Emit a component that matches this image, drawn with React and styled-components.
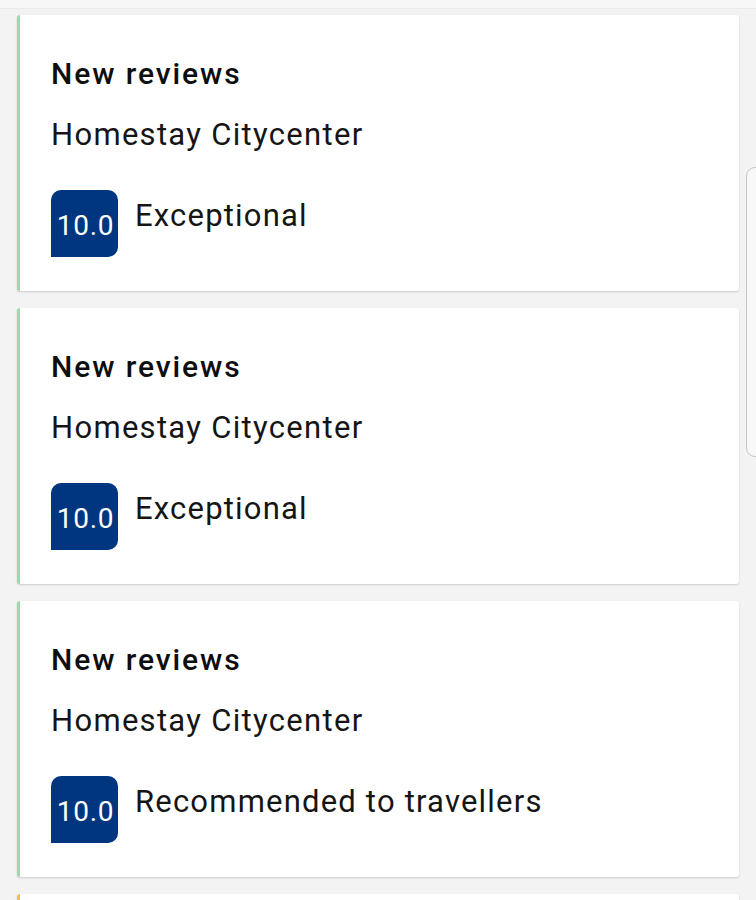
import React from "react";
import styled, { createGlobalStyle } from "styled-components";

const Global = createGlobalStyle`
  html, body {
    margin: 0;
    padding: 0;
    background: #f3f3f3;
    font-family: Roboto, "Noto Sans", "Liberation Sans", sans-serif;
    overflow: hidden;
  }
  #root { height: 900px; position: relative; overflow: hidden; }
`;

const TopStrip = styled.div`
  height: 8px;
  background: #f7f7f7;
  border-bottom: 1px solid #ebebeb;
`;

const List = styled.div`
  display: flex;
  flex-direction: column;
  gap: 17px;
  padding: 6px 17px 0 17px;
`;

const Card = styled.div`
  background: #ffffff;
  border-left: 3px solid ${(p) => p.$accent};
  border-radius: 3px;
  box-shadow: 0 1px 2px rgba(0, 0, 0, 0.16);
  padding: 41px 24px 34px 31px;
  display: flex;
  flex-direction: column;
  min-height: ${(p) => (p.$stub ? "60px" : "auto")};
`;

const Title = styled.div`
  font-size: 30px;
  font-weight: 500;
  line-height: 36px;
  letter-spacing: 1.9px;
  color: #0e0e0e;
`;

const Property = styled.div`
  font-size: 31px;
  line-height: 40px;
  letter-spacing: 1.3px;
  color: #151515;
  margin-top: 23px;
`;

const ScoreRow = styled.div`
  display: flex;
  align-items: flex-start;
  gap: 17px;
  margin-top: 35px;
`;

const Badge = styled.div`
  width: 67px;
  height: 67px;
  flex: none;
  background: #003580;
  border-radius: 10px 10px 10px 0;
  color: #ffffff;
  font-size: 28px;
  letter-spacing: 0.7px;
  display: flex;
  align-items: center;
  justify-content: center;
  padding: 4px 0 0 2px;
  box-sizing: border-box;
`;

const Label = styled.div`
  font-size: 31px;
  line-height: 40px;
  letter-spacing: 1.2px;
  color: #151515;
  margin-top: 6px;
`;

const Handle = styled.div`
  position: absolute;
  left: 746px;
  top: 167px;
  width: 30px;
  height: 288px;
  border: 1px solid #c4c4c4;
  border-radius: 9px 0 0 9px;
  background: #f8f8f8;
`;

const items = [
  { accent: "#9fd8ad", label: "Exceptional" },
  { accent: "#9fd8ad", label: "Exceptional" },
  { accent: "#9fd8ad", label: "Recommended to travellers" },
];

export default function App() {
  return (
    <>
      <Global />
      <TopStrip />
      <List>
        {items.map((it, i) => (
          <Card key={i} $accent={it.accent}>
            <Title>New reviews</Title>
            <Property>Homestay Citycenter</Property>
            <ScoreRow>
              <Badge>10.0</Badge>
              <Label>{it.label}</Label>
            </ScoreRow>
          </Card>
        ))}
        <Card $accent="#f5c13a" $stub />
      </List>
      <Handle />
    </>
  );
}
